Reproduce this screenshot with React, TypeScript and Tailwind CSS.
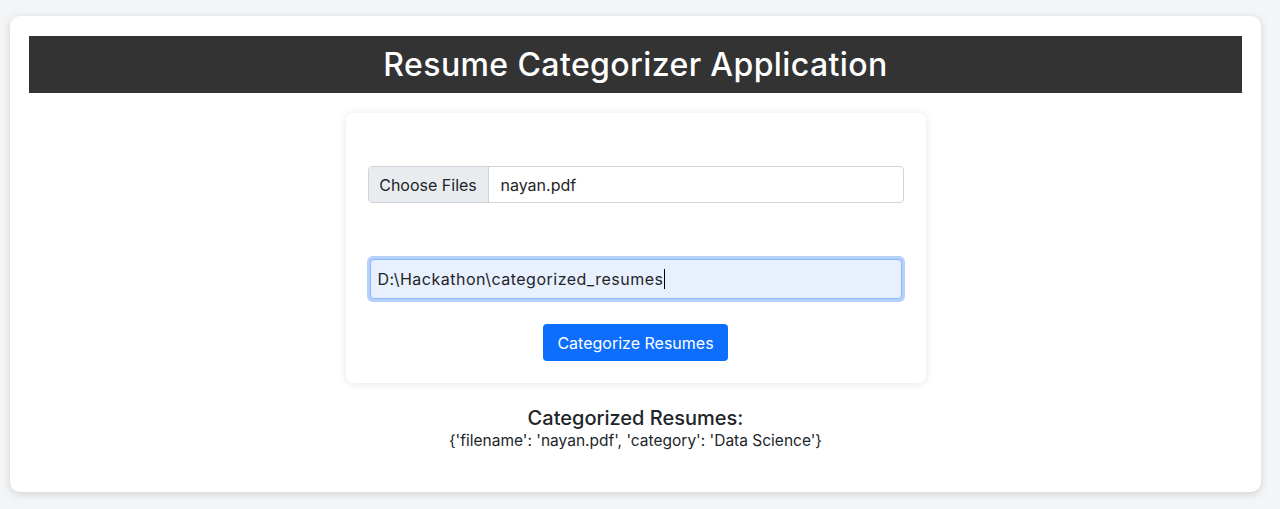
export default function App() {
  return (
    <div className="min-h-[509px] bg-[#f4f5f7] px-[10px] pt-[16px] font-['Inter',sans-serif] text-[#212529]">
      <div className="w-[1251px] h-[476px] rounded-[10px] bg-white px-[19px] pt-[20px] shadow-[0_2px_8px_rgba(0,0,0,0.15)]">
        {/* header bar */}
        <div className="h-[57px] bg-[#333333] flex items-center justify-center">
          <h1 className="text-[32px] font-medium text-white tracking-[0.4px]">Resume Categorizer Application</h1>
        </div>

        {/* form card */}
        <div className="w-[580px] h-[270px] mx-auto mt-[20px] rounded-[8px] bg-white px-[22px] pt-[53px] shadow-[0_1px_8px_rgba(0,0,0,0.1)]">
          <div className="flex h-[37px] rounded-[4px] border border-[#ced4da] overflow-hidden text-[16px]">
            <div className="w-[120px] bg-[#e9ecef] border-r border-[#ced4da] flex items-center justify-center text-[#212529]">Choose Files</div>
            <div className="flex-1 flex items-center pl-[12px] text-[#212529]">nayan.pdf</div>
          </div>
          <div className="mt-[53px] -mx-[1px] h-[46px] rounded-[6px] bg-[#b7d0f9] p-[3px]">
            <div className="h-full rounded-[4px] border border-[#86b7fe] bg-[#e8f0fe] flex items-center pl-[7px] text-[16px] tracking-[0.5px] text-[#212529]">
              D:\Hackathon\categorized_resumes<span className="w-px h-[20px] bg-black ml-px" />
            </div>
          </div>
          <div className="flex justify-center mt-[22px]">
            <button className="w-[185px] h-[37px] rounded-[4px] bg-[#0d6efd] text-white text-[16px]">Categorize Resumes</button>
          </div>
        </div>

        {/* results */}
        <div className="mt-[22px] text-center">
          <div className="text-[20px] font-medium leading-[26px] text-[#212529]">Categorized Resumes:</div>
          <div className="text-[15.5px] leading-[20px] text-[#212529]">{"{'filename': 'nayan.pdf', 'category': 'Data Science'}"}</div>
        </div>
      </div>
    </div>
  )
}
